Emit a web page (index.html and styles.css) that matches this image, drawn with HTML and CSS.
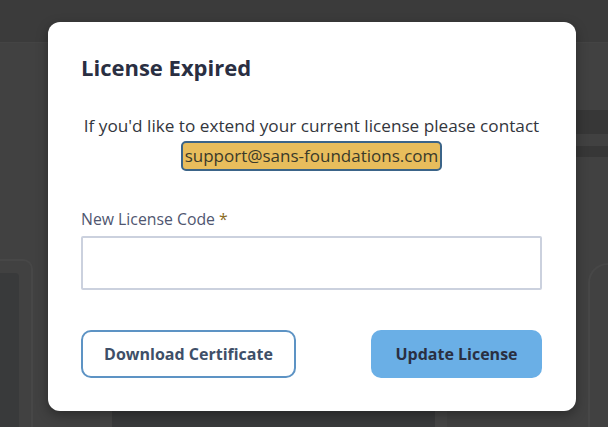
FILE: index.html
```html
<!DOCTYPE html>
<html>
<head>
<meta charset="utf-8">
<link rel="stylesheet" href="styles.css">
</head>
<body>
<div class="app">
  <div class="topbar"></div>
  <div class="bg-band band-a"></div>
  <div class="bg-band band-b"></div>
  <div class="bg-card card-left"><div class="card-inner"></div></div>
  <div class="bg-card card-right"></div>
  <div class="bg-strip strip-1"></div>
  <div class="bg-strip strip-2"></div>
  <div class="bg-strip strip-3"></div>
</div>
<div class="overlay">
  <div class="modal">
    <h1 class="title">License Expired</h1>
    <div class="message">
      <p class="message-line">If you'd like to extend your current license please contact</p>
      <span class="email">support@sans-foundations.com</span>
    </div>
    <label class="field-label">New License Code<span class="req">*</span></label>
    <input class="field-input" type="text">
    <div class="actions">
      <button class="btn btn-outline">Download Certificate</button>
      <button class="btn btn-primary">Update License</button>
    </div>
  </div>
</div>
</body>
</html>
```
FILE: styles.css
```css
* { box-sizing: border-box; }
html, body { margin: 0; padding: 0; }
body {
  width: 608px;
  height: 427px;
  overflow: hidden;
  background: #414141;
  font-family: "Open Sans", "Noto Sans", sans-serif;
  position: relative;
}
.app { position: absolute; inset: 0; overflow: hidden; }
.topbar { height: 43px; background: #3b3b3b; border-bottom: 1px solid #444; }
.bg-band { position: absolute; left: 560px; right: 0; background: #373737; }
.band-a { top: 110px; height: 24px; }
.band-b { top: 146px; height: 11px; }
.bg-card { position: absolute; border: 2px solid #474747; }
.card-left { left: 0; top: 259px; width: 33px; bottom: 0; border-left: none; border-bottom: none; border-radius: 0 10px 0 0; }
.card-inner { position: absolute; left: 0; top: 12px; right: 12px; bottom: 0; background: #393a3b; border-radius: 0 4px 0 0; }
.card-right { left: 588px; top: 263px; right: 0; bottom: 0; border-right: none; border-bottom: none; border-radius: 20px 0 0 0; }
.bg-strip { position: absolute; top: 411px; bottom: 0; }
.strip-1 { left: 100px; width: 12px; background: #454545; }
.strip-2 { left: 112px; width: 324px; background: #393a3b; }
.strip-3 { left: 435px; width: 12px; background: #454545; }

.overlay { position: absolute; inset: 0; }
.modal {
  position: absolute;
  left: 48px;
  top: 22px;
  width: 528px;
  height: 389px;
  background: #fff;
  border-radius: 12px;
  box-shadow: 0 4px 12px rgba(0,0,0,0.35);
  padding: 31px 34px 33px 33px;
  display: flex;
  flex-direction: column;
}
.title {
  margin: 0;
  font-size: 22px;
  line-height: 28px;
  font-weight: 700;
  color: #2a2f42;
}
.message {
  margin-top: 33px;
  display: flex;
  flex-direction: column;
  align-items: center;
  color: #33363d;
}
.message-line {
  margin: 0;
  font-size: 17.2px;
  line-height: 24px;
}
.email {
  margin-top: 3px;
  display: inline-block;
  background: #e8bd5c;
  border: 2px solid #3b6488;
  border-radius: 5px;
  padding: 0 2px;
  font-size: 17px;
  line-height: 26px;
  color: #3a3a2a;
}
.field-label {
  margin-top: 38px;
  font-size: 15.8px;
  line-height: 20px;
  color: #4f5670;
}
.req { color: #8b6b1d; margin-left: 4px; }
.field-input {
  margin-top: 7px;
  height: 54px;
  width: 100%;
  border: 2px solid #cbd1de;
  border-radius: 2px;
  background: #fff;
  outline: none;
}
.actions {
  margin-top: 40px;
  display: flex;
  justify-content: space-between;
  align-items: center;
}
.btn {
  font-family: inherit;
  font-size: 16px;
  font-weight: 700;
  height: 48px;
  border-radius: 10px;
  cursor: pointer;
}
.btn-outline {
  width: 215px;
  background: #fff;
  border: 2px solid #5d93c4;
  color: #3e4f68;
}
.btn-primary {
  width: 171px;
  background: #6aafe6;
  border: none;
  color: #2a2f42;
}
```
